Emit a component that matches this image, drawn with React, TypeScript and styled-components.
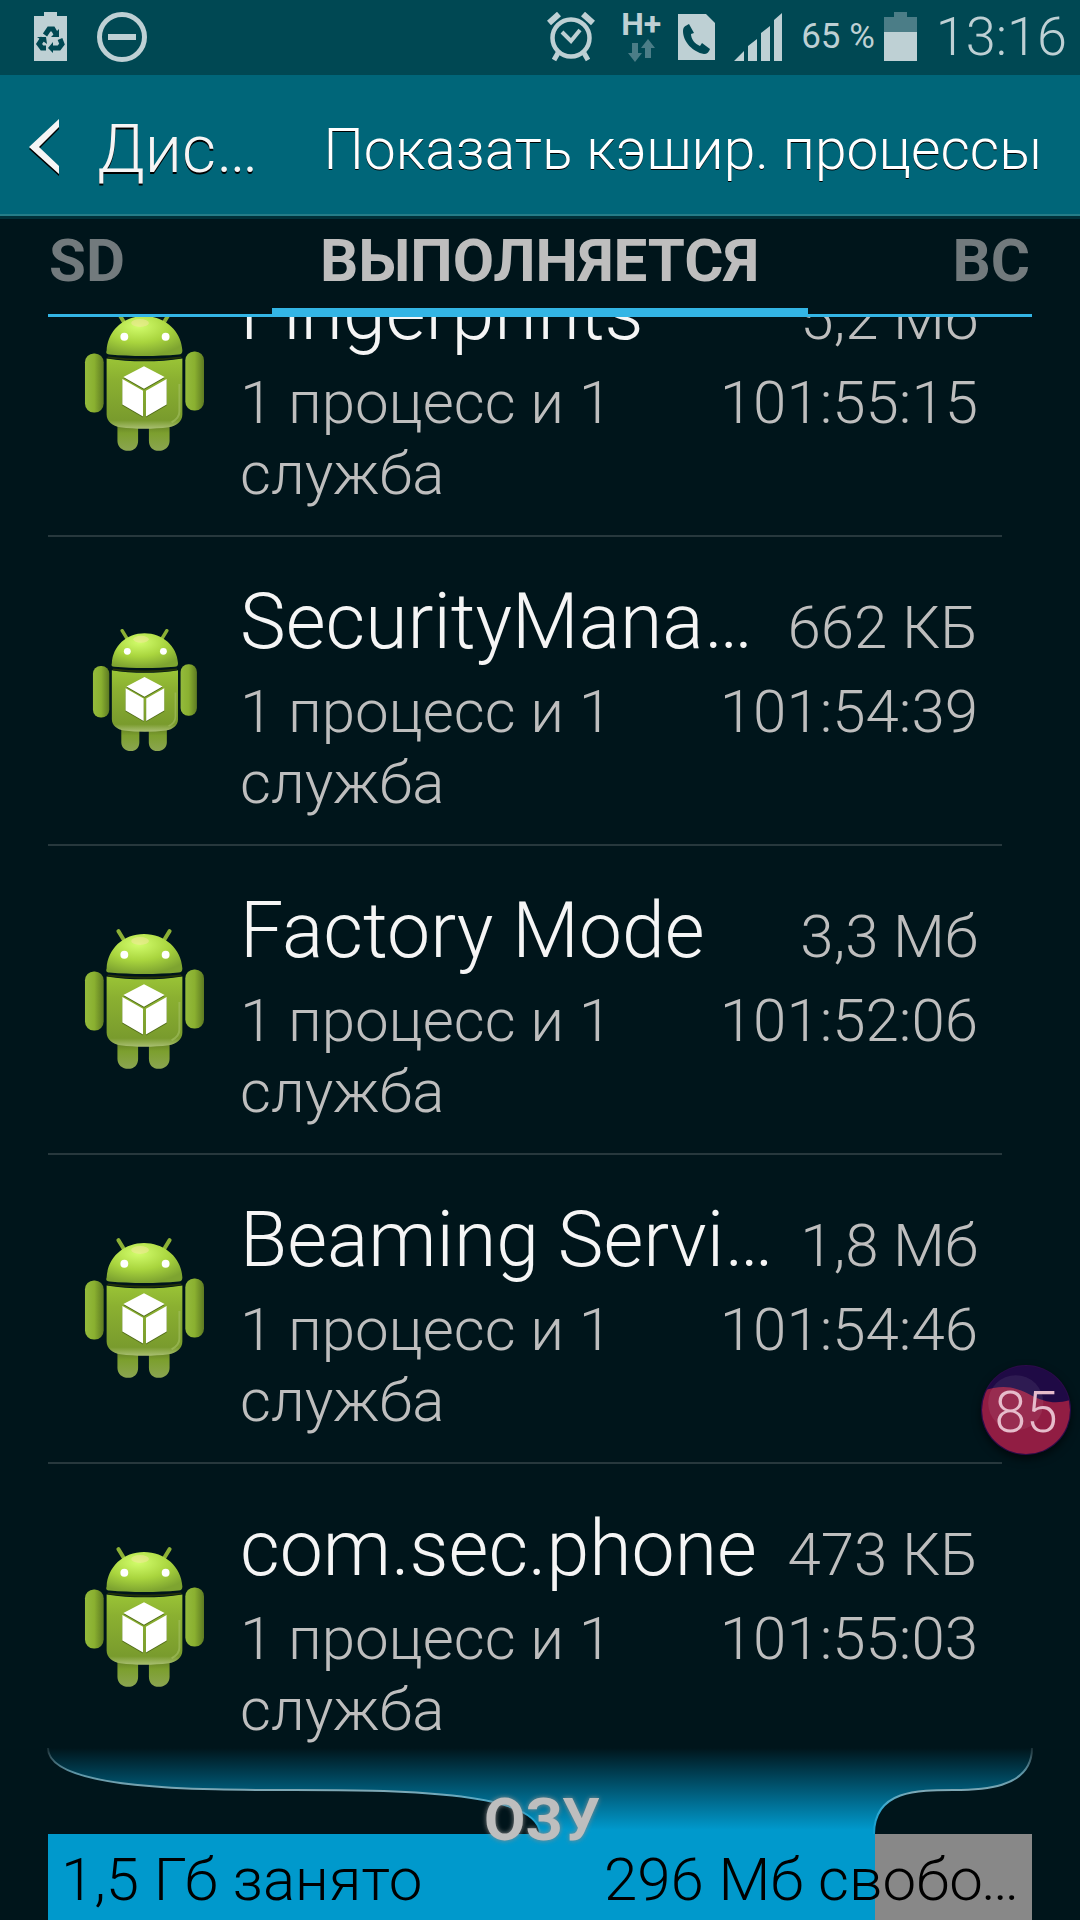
import React from "react";
import styled, { createGlobalStyle } from "styled-components";

const font = 'Roboto, "Noto Sans", sans-serif';

const Global = createGlobalStyle`
  * { box-sizing: border-box; }
  body { margin: 0; background: #00151b; font-family: ${font}; font-weight: 300; color: #bebebe; }
  button { font: inherit; color: inherit; background: none; border: 0; padding: 0; cursor: pointer; }
`;

const Screen = styled.div`
  display: flex;
  flex-direction: column;
  height: 100vh;
  overflow: hidden;
  background: #00151b;
`;

const StatusBar = styled.div`
  display: flex;
  align-items: center;
  justify-content: space-between;
  flex: none;
  height: 75px;
  padding: 0 13px 2px 34px;
  background: #004853;
  color: #bed0d4;
`;

const StatusGroup = styled.div<{ $gap: number }>`
  display: flex;
  align-items: center;
  gap: ${(p) => p.$gap}px;
`;

const Network = styled.div`
  display: flex;
  flex-direction: column;
  align-items: center;
  width: 36px;
  font-weight: 700;
  font-size: 32px;
  line-height: 26px;
  white-space: nowrap;
  svg { margin-top: 2px; }
`;

const Battery = styled.div`
  display: flex;
  align-items: center;
  gap: 9px;
  font-size: 35px;
  line-height: 42px;
  font-weight: 400;
`;

const Clock = styled.time`
  font-size: 54px;
  line-height: 64px;
`;

const Header = styled.header`
  display: flex;
  align-items: center;
  justify-content: space-between;
  flex: none;
  height: 141px;
  padding: 11px 38px 0 29px;
  background: #006679;
  border-bottom: 2px solid #257d88;
  color: #f5f5f5;
`;

const Back = styled.button`
  display: flex;
  align-items: center;
  gap: 37px;
  font-size: 66px;
  line-height: 78px;
  text-shadow: 0 2px 0 #000;
`;

const Action = styled.button`
  font-size: 57px;
  line-height: 68px;
  color: #fff;
  text-shadow: 0 1px 0 #000;
`;

const Tabs = styled.nav`
  display: grid;
  grid-template-columns: 1fr 536px 1fr;
  flex: none;
  height: 101px;
  padding: 0 48px;
  border-top: 3px solid #003038;
`;

const Tab = styled.button<{ $active?: boolean; $align: string }>`
  border-bottom: ${(p) => (p.$active ? 9 : 3)}px solid #33b5e5;
  padding: 0 2px ${(p) => (p.$active ? 5 : 11)}px 1px;
  font-size: 60px;
  line-height: 70px;
  font-weight: 700;
  text-align: ${(p) => p.$align};
  color: ${(p) => (p.$active ? "#bebebe" : "#727a7d")};
`;

const List = styled.ul`
  display: flex;
  flex-direction: column;
  justify-content: flex-end;
  flex: 1;
  min-height: 0;
  margin: 0;
  padding: 0 78px 0 48px;
  overflow: hidden;
  list-style: none;
`;

const Item = styled.li`
  display: flex;
  align-items: center;
  flex: none;
  border-bottom: 2px solid #27383d;
  &:last-child { border-bottom-color: transparent; }
`;

const IconCell = styled.div`
  display: flex;
  justify-content: center;
  flex: none;
  width: 192px;
  padding-bottom: 2px;
`;

const Body = styled.div`
  display: flex;
  flex-direction: column;
  gap: 9px;
  flex: 1;
  min-width: 0;
  padding: 40px 24px 26px 0;
`;

const Line = styled.div`
  display: flex;
  align-items: baseline;
  justify-content: space-between;
  gap: 24px;
`;

const Title = styled.h2`
  flex: 0 1 auto;
  min-width: 0;
  margin: 0;
  overflow: hidden;
  white-space: nowrap;
  text-overflow: ellipsis;
  font-size: 77px;
  line-height: 90px;
  font-weight: 300;
  color: #f5f5f5;
`;

const Meta = styled.span`
  flex: none;
  font-size: 60px;
  line-height: 71px;
`;

const Detail = styled.p`
  flex: 0 1 400px;
  margin: 0;
  font-size: 60px;
  line-height: 71px;
`;

const Memory = styled.footer`
  position: relative;
  flex: none;
  margin-top: -25px;
  padding: 0 48px;
`;

const Funnel = styled.svg`
  display: block;
  width: 100%;
  height: 86px;
  overflow: visible;
`;

const MemoryLabel = styled.strong`
  position: absolute;
  top: 37px;
  left: 4px;
  right: 0;
  font-size: 60px;
  line-height: 70px;
  font-weight: 700;
  text-align: center;
  text-shadow: 0 0 5px #8c8c8c;
`;

const Bar = styled.div`
  display: flex;
  align-items: center;
  justify-content: space-between;
  height: 86px;
  padding: 4px 9px 0 13px;
  background: linear-gradient(to right, #0099cc 84%, #888 84%);
  color: #000;
  font-size: 60px;
  line-height: 71px;
`;

const Free = styled.span`
  width: 419px;
  overflow: hidden;
  white-space: nowrap;
  text-overflow: ellipsis;
`;

const Bubble = styled.button`
  position: fixed;
  z-index: 2;
  right: 9px;
  bottom: 465px;
  width: 90px;
  height: 90px;
  border-radius: 50%;
  box-shadow: 0 4px 8px rgba(0, 0, 0, 0.6);
  svg { display: block; }
`;

const BubbleValue = styled.span`
  position: absolute;
  inset: 0;
  font-size: 57px;
  line-height: 96px;
  text-align: center;
  color: #e6bccb;
`;

const RobotPaints = () => (
  <svg width="0" height="0" style={{ display: "block" }} aria-hidden="true">
    <defs>
      <radialGradient id="head" cx=".42" cy=".25" r=".75">
        <stop offset="0" stopColor="#d2fd6c" />
        <stop offset=".55" stopColor="#a9d53e" />
        <stop offset="1" stopColor="#7ea430" />
      </radialGradient>
      <linearGradient id="torso" x1="0" y1="0" x2="0" y2="1">
        <stop offset="0" stopColor="#9ac436" />
        <stop offset=".3" stopColor="#8bb031" />
        <stop offset=".88" stopColor="#799b2d" />
        <stop offset="1" stopColor="#a9bf72" />
      </linearGradient>
      <linearGradient id="arm" x1="0" y1="0" x2="1" y2="0">
        <stop offset="0" stopColor="#94bb3c" />
        <stop offset=".5" stopColor="#8ab030" />
        <stop offset="1" stopColor="#5d7a22" />
      </linearGradient>
      <linearGradient id="leg" x1="0" y1="0" x2="0" y2="1">
        <stop offset="0" stopColor="#5a751f" />
        <stop offset=".4" stopColor="#7c9f2e" />
        <stop offset="1" stopColor="#8ba551" />
      </linearGradient>
    </defs>
  </svg>
);

const Robot = ({ size }: { size: number }) => (
  <svg width={size} height={Math.round((size * 142) / 122)} viewBox="0 0 122 142" aria-hidden="true">
    <path d="M35 2l8 13M87 2l-8 13" stroke="#8cb035" strokeWidth="4" strokeLinecap="round" />
    <g fill="url(#arm)">
      <rect x="1" y="43" width="19" height="60" rx="9" />
      <rect x="103" y="41" width="19" height="60" rx="9" />
    </g>
    <g fill="url(#leg)">
      <path d="M34 112h21v20c0 6-4 10-10 10s-11-4-11-10zM66 112h21v20c0 6-5 10-11 10s-10-4-10-10z" />
    </g>
    <path d="M23 40C24 20 40 5 61 5s38 15 39 35c0 3-1 4-4 4-22 2-48 2-70 0-3 0-4-1-3-4z" fill="url(#head)" />
    <path d="M23 48c24 4 53 4 77 0v57c0 7-6 12-14 13-16 2-33 2-49 0-8-1-14-6-14-13z" fill="url(#torso)" />
    <path d="M24 47c24 3 51 3 75 0" fill="none" stroke="#223209" strokeWidth="2" />
    <path d="M97 74v28c0 6-4 9-8 11" fill="none" stroke="#a4bf62" strokeWidth="2" opacity=".6" />
    <ellipse cx="57" cy="12" rx="9" ry="4" fill="#f3e69a" opacity=".55" />
    <circle cx="41" cy="26" r="4" fill="#fff" />
    <circle cx="83" cy="26" r="4" fill="#fff" />
    <path d="M61 57l21 11-21 12-21-12zM39 70l21 12v26L39 96zM84 70L63 82v26l21-12z" fill="#506b19" />
    <path d="M61 56l21 11-21 12-21-12zM39 69l21 12v26L39 95zM84 69L63 81v26l21-12z" fill="#fff" />
  </svg>
);

const AlarmIcon = () => (
  <svg width="57" height="50" viewBox="0 0 57 50" fill="none" stroke="#bed0d4" aria-hidden="true">
    <circle cx="24" cy="26" r="18.5" strokeWidth="4.5" />
    <path d="M15 20l9 9 9-11" strokeWidth="4" />
    <path d="M2 11l10-9M46 11L36 2" strokeWidth="6" />
    <path d="M11 41l-4 7M37 41l4 7" strokeWidth="5" />
  </svg>
);

const DataArrows = () => (
  <svg width="27" height="24" viewBox="0 0 27 24" fill="#4b7d87" aria-hidden="true">
    <path d="M4 4h6v10h4L7 23 0 14h4zM20 0l7 9h-4v10h-6V9h-4z" />
  </svg>
);

const PhoneIcon = () => (
  <svg width="37" height="46" viewBox="0 0 37 46" aria-hidden="true">
    <path d="M0 0h28l9 9v37H0z" fill="#bed0d4" />
    <path d="M11 10l5 9-3 1c0 5 4 10 9 12l2-3 8 6c-1 3-3 5-6 5C15 38 5 28 5 17c0-4 2-5 6-7z" fill="#004853" />
  </svg>
);

const SignalIcon = () => (
  <svg width="48" height="48" viewBox="0 0 48 48" fill="#bed0d4" aria-hidden="true">
    <path d="M0 48l10-10v10zM14 48V33l9-7v22zM27 48V20l9-7v35zM40 48V7l8-7v48z" />
  </svg>
);

const items = [
  { name: "Fingerprints", size: "5,2 Мб", time: "101:55:15", icon: 120 },
  { name: "SecurityManagerService", size: "662 КБ", time: "101:54:39", icon: 105 },
  { name: "Factory Mode", size: "3,3 Мб", time: "101:52:06", icon: 120 },
  { name: "Beaming Service", size: "1,8 Мб", time: "101:54:46", icon: 120 },
  { name: "com.sec.phone", size: "473 КБ", time: "101:55:03", icon: 120 },
];

const leftCurve = "M0 0C0 42 150 42 246 42C340 42 492 42 492 86";
const rightCurve = "M826 86C826 42 870 42 905 42C930 42 984 42 984 0";

export default function App() {
  return (
    <Screen>
      <Global />
      <RobotPaints />
      <StatusBar>
        <StatusGroup $gap={30}>
          <svg width="33" height="50" viewBox="0 0 33 50" fill="#bed0d4" aria-hidden="true">
            <path d="M0 4h10V0h13v4h10v45H0z" />
            <g fill="none" stroke="#004853" strokeWidth="5">
              <path d="M11 23l4-6h4l3 5M26 27l2 5-3 4h-7M12 36H8l-3-4 4-6" />
            </g>
            <path d="M25 17v8h-8zM19 30v11l-5-5zM3 25h9l1 7z" fill="#004853" />
          </svg>
          <svg width="50" height="50" viewBox="0 0 50 50" aria-hidden="true">
            <circle cx="25" cy="25" r="22.5" fill="none" stroke="#bed0d4" strokeWidth="5" />
            <path d="M11 22h28v6H11z" fill="#bed0d4" />
          </svg>
        </StatusGroup>
        <StatusGroup $gap={19}>
          <AlarmIcon />
          <Network>
            H+
            <DataArrows />
          </Network>
          <PhoneIcon />
          <SignalIcon />
          <Battery>
            65 %
            <svg width="33" height="49" viewBox="0 0 33 49" aria-hidden="true">
              <path d="M0 5h10V0h13v5h10v16H0z" fill="#4b7d87" />
              <path d="M0 20h33v29H0z" fill="#bed0d4" />
            </svg>
          </Battery>
          <Clock>13:16</Clock>
        </StatusGroup>
      </StatusBar>
      <Header>
        <Back>
          <svg width="31" height="64" viewBox="0 0 31 64" aria-hidden="true">
            <path d="M30 3v8L10 31l20 19v8L0 31z" fill="#000" />
            <path d="M30 1v8L10 29l20 19v8L0 29z" fill="#f5f5f5" />
          </svg>
          Дис…
        </Back>
        <Action>Показать кэшир. процессы</Action>
      </Header>
      <Tabs>
        <Tab $align="left">SD</Tab>
        <Tab $align="center" $active>ВЫПОЛНЯЕТСЯ</Tab>
        <Tab $align="right">ВС</Tab>
      </Tabs>
      <List>
        {items.map((it) => (
          <Item key={it.name}>
            <IconCell>
              <Robot size={it.icon} />
            </IconCell>
            <Body>
              <Line>
                <Title>{it.name}</Title>
                <Meta>{it.size}</Meta>
              </Line>
              <Line>
                <Detail>1 процесс и 1 служба</Detail>
                <Meta>{it.time}</Meta>
              </Line>
            </Body>
          </Item>
        ))}
      </List>
      <Memory>
        <Funnel viewBox="0 0 984 86" preserveAspectRatio="none" aria-hidden="true">
          <defs>
            <linearGradient id="glow" x1="0" y1="0" x2="0" y2="1">
              <stop offset="0" stopColor="#0099cc" stopOpacity="0" />
              <stop offset=".95" stopColor="#0099cc" />
            </linearGradient>
            <linearGradient id="edge" gradientUnits="userSpaceOnUse" x1="0" y1="0" x2="0" y2="86">
              <stop offset="0" stopColor="#7b939a" stopOpacity=".2" />
              <stop offset=".3" stopColor="#5f97a8" />
              <stop offset=".5" stopColor="#7fa9b6" />
              <stop offset=".7" stopColor="#33a9d2" />
              <stop offset="1" stopColor="#0f9fd0" />
            </linearGradient>
          </defs>
          <path d={`${leftCurve}L826 86C826 42 870 42 905 42C930 42 984 42 984 0z`} fill="url(#glow)" />
          <path d={leftCurve} fill="none" stroke="url(#edge)" strokeWidth="2" />
          <path d={rightCurve} fill="none" stroke="url(#edge)" strokeWidth="2" />
        </Funnel>
        <Bar>
          <span>1,5 Гб занято</span>
          <Free>296 Мб свободно</Free>
        </Bar>
        <MemoryLabel>ОЗУ</MemoryLabel>
      </Memory>
      <Bubble>
        <svg width="90" height="90" viewBox="0 0 88 88" aria-hidden="true">
          <defs>
            <clipPath id="ball">
              <circle cx="44" cy="44" r="43" />
            </clipPath>
          </defs>
          <circle cx="44" cy="44" r="44" fill="#2c0a4a" />
          <g clipPath="url(#ball)">
            <path d="M0 0h88v88H0z" fill="#1f0a45" />
            <path d="M0 26C22 18 34 22 48 29s24 10 40 5v54H0z" fill="#911d43" />
            <circle cx="34" cy="37" r="27" fill="#fff" opacity=".07" />
          </g>
        </svg>
        <BubbleValue>85</BubbleValue>
      </Bubble>
    </Screen>
  );
}
